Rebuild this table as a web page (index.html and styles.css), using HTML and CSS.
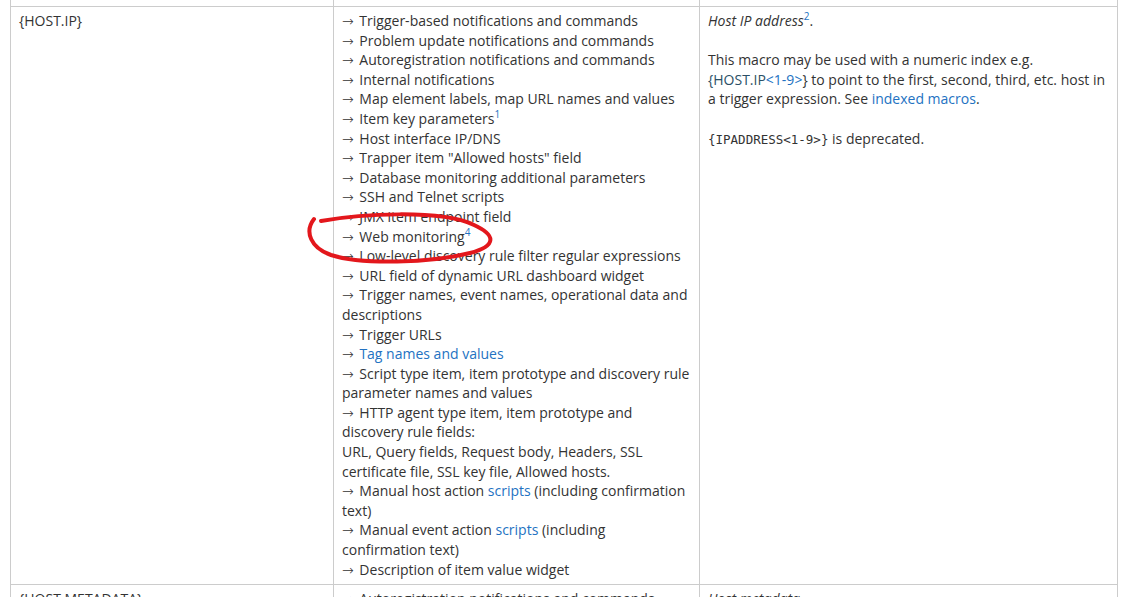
FILE: index.html
```html
<!DOCTYPE html>
<html lang="en">
<head>
<meta charset="utf-8">
<title>Macros</title>
<link rel="stylesheet" href="styles.css">
</head>
<body>
<div class="page">
  <table class="macros">
    <colgroup>
      <col class="c-macro">
      <col class="c-where">
      <col class="c-desc">
    </colgroup>
    <tbody>
      <tr class="prev">
        <td></td><td></td><td></td>
      </tr>
      <tr>
        <td>{HOST.IP}</td>
        <td>
          <div><span class="arr">→</span> Trigger-based notifications and commands</div>
          <div><span class="arr">→</span> Problem update notifications and commands</div>
          <div><span class="arr">→</span> Autoregistration notifications and commands</div>
          <div><span class="arr">→</span> Internal notifications</div>
          <div><span class="arr">→</span> Map element labels, map URL names and values</div>
          <div><span class="arr">→</span> Item key parameters<sup class="link">1</sup></div>
          <div><span class="arr">→</span> Host interface IP/DNS</div>
          <div><span class="arr">→</span> Trapper item "Allowed hosts" field</div>
          <div><span class="arr">→</span> Database monitoring additional parameters</div>
          <div><span class="arr">→</span> SSH and Telnet scripts</div>
          <div><span class="arr">→</span> JMX item endpoint field</div>
          <div><span class="arr">→</span> Web monitoring<sup class="link">4</sup></div>
          <div><span class="arr">→</span> Low-level discovery rule filter regular expressions</div>
          <div><span class="arr">→</span> URL field of dynamic URL dashboard widget</div>
          <div><span class="arr">→</span> Trigger names, event names, operational data and descriptions</div>
          <div><span class="arr">→</span> Trigger URLs</div>
          <div><span class="arr">→</span> <span class="link">Tag names and values</span></div>
          <div><span class="arr">→</span> Script type item, item prototype and discovery rule parameter names and values</div>
          <div><span class="arr">→</span> HTTP agent type item, item prototype and discovery rule fields:<br>URL, Query fields, Request body, Headers, SSL certificate file, SSL key file, Allowed hosts.</div>
          <div><span class="arr">→</span> Manual host action <span class="link">scripts</span> (including confirmation text)</div>
          <div><span class="arr">→</span> Manual event action <span class="link">scripts</span> (including confirmation text)</div>
          <div><span class="arr">→</span> Description of item value widget</div>
        </td>
        <td>
          <p><em>Host IP address</em><sup class="link">2</sup>.</p>
          <p>This macro may be used with a numeric index e.g. <span class="macro">{HOST.IP</span><span class="link">&lt;1-9&gt;</span>} to point to the first, second, third, etc. host in a trigger expression. See <span class="link">indexed macros</span>.</p>
          <p><code>{IPADDRESS&lt;1-9&gt;}</code> is deprecated.</p>
        </td>
      </tr>
      <tr>
        <td>{HOST.METADATA}</td>
        <td>
          <div><span class="arr">→</span> Autoregistration notifications and commands</div>
        </td>
        <td>
          <p><em>Host metadata.</em></p>
        </td>
      </tr>
    </tbody>
  </table>
</div>
<svg class="annotation" width="1126" height="597" viewBox="0 0 1126 597" aria-hidden="true">
  <path d="M321 221 C 360 214, 440 209, 474 225 C 496 235, 497 246, 470 253 C 430 263, 362 265, 331 255 C 311 248, 304 232, 314 219" fill="none" stroke="#e3171c" stroke-width="4" stroke-linecap="round" stroke-linejoin="round"/>
</svg>
</body>
</html>
```

FILE: styles.css
```css
html {
  overflow: hidden;
}

body {
  margin: 0;
  background: #ffffff;
  font-family: "Open Sans", "Noto Sans", sans-serif;
  font-size: 14px;
  line-height: 19.6px;
  color: #333333;
}

.page {
  padding-left: 10px;
}

.macros {
  border-collapse: collapse;
  table-layout: fixed;
  width: 1107px;
}

.c-macro { width: 323px; }
.c-where { width: 366px; }
.c-desc { width: 418px; }

.macros td {
  border: 1px solid #cccccc;
  padding: 4px 8px 5px 8px;
  vertical-align: top;
}

.macros .prev td {
  border-top: none;
  height: 6px;
  padding: 0;
}

.macros p {
  margin: 0 0 19.6px 0;
}

.macros p:last-child {
  margin-bottom: 0;
}

.arr {
  font-family: "DejaVu Sans", sans-serif;
  font-weight: 200;
  font-size: 14px;
  line-height: 0;
  margin-right: 2px;
}

.macro {
  color: #2b4f66;
}

.link {
  color: #2372c2;
}

sup {
  font-size: 10px;
  line-height: 0;
  vertical-align: 6px;
}

em {
  font-style: italic;
}

code {
  font-family: "DejaVu Sans Mono", "Liberation Mono", monospace;
  font-size: 12.5px;
}

.annotation {
  position: absolute;
  left: 0;
  top: 0;
  pointer-events: none;
}
```
